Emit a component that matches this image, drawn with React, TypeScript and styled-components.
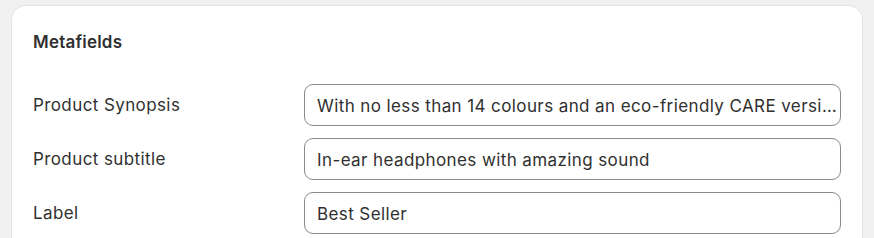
import React from "react";
import styled, { createGlobalStyle } from "styled-components";

const Global = createGlobalStyle`
  html, body { margin: 0; padding: 0; background: #f1f1f1; }
  body { font-family: Inter, "Noto Sans", sans-serif; color: #303030; -webkit-font-smoothing: antialiased; }
  * { box-sizing: border-box; }
`;

const Page = styled.div`
  padding: 6px 12px 0 12px;
  width: 874px;
  height: 238px;
  overflow: hidden;
`;

const Card = styled.section`
  background: #ffffff;
  border-radius: 14px;
  box-shadow: 0 0 0 1px #e3e3e3, 0 1px 0 0 #d4d4d4;
  padding: 26px 21px 20px 21px;
  min-height: 300px;
`;

const Title = styled.h2`
  margin: 0 0 32px 0;
  font-size: 17px;
  line-height: 20px;
  font-weight: 600;
  letter-spacing: 0.2px;
  color: #303030;
`;

const Rows = styled.div`
  display: flex;
  flex-direction: column;
  gap: 12px;
`;

const Row = styled.div`
  display: grid;
  grid-template-columns: 271px 1fr;
  align-items: center;
`;

const Label = styled.label`
  font-size: 17px;
  line-height: 20px;
  letter-spacing: 0.4px;
  color: #303030;
`;

const Field = styled.div`
  height: 42px;
  border: 1px solid #8a8a8a;
  border-radius: 9px;
  padding: 1px 2px 0 12px;
  display: flex;
  align-items: center;
  font-size: 17px;
  letter-spacing: 0.4px;
  color: #303030;
  min-width: 0;
`;

const Value = styled.span`
  white-space: nowrap;
  overflow: hidden;
  text-overflow: ellipsis;
`;

const rows = [
  { label: "Product Synopsis", value: "With no less than 14 colours and an eco-friendly CARE version of the product" },
  { label: "Product subtitle", value: "In-ear headphones with amazing sound" },
  { label: "Label", value: "Best Seller" },
];

export default function App() {
  return (
    <>
      <Global />
      <Page>
        <Card>
          <Title>Metafields</Title>
          <Rows>
            {rows.map((r) => (
              <Row key={r.label}>
                <Label>{r.label}</Label>
                <Field>
                  <Value>{r.value}</Value>
                </Field>
              </Row>
            ))}
          </Rows>
        </Card>
      </Page>
    </>
  );
}
